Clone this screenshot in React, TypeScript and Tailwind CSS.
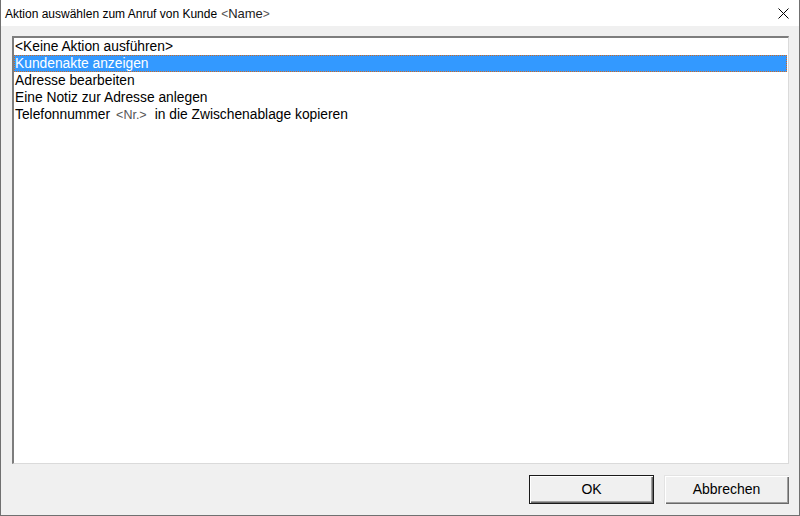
import React from "react";

const items = [
  "<Keine Aktion ausführen>",
  "Kundenakte anzeigen",
  "Adresse bearbeiten",
  "Eine Notiz zur Adresse anlegen",
];

export default function App() {
  return (
    <div
      className="w-[800px] h-[516px] flex flex-col bg-[#f0f0f0] border-l border-r border-b border-[#707070] overflow-hidden"
      style={{ fontFamily: '"Liberation Sans", Arial, sans-serif' }}
    >
      <div className="h-[26px] shrink-0 bg-white flex items-center justify-between pl-[4px] pr-[10px]">
        <div className="text-[12px] text-black leading-none flex items-baseline">
          <span>Aktion auswählen zum Anruf von Kunde</span>
          <span className="ml-[4px] text-[#555]">&lt;</span>
          <span className="text-[#222] text-[13px]">Name</span>
          <span className="text-[#555]">&gt;</span>
        </div>
        <svg width="11" height="11" viewBox="0 0 11 11" className="shrink-0">
          <path d="M0.5 0.5 L10.5 10.5 M10.5 0.5 L0.5 10.5" stroke="#000" strokeWidth="1" fill="none" />
        </svg>
      </div>
      <div className="flex-1 flex flex-col pt-[10px] pl-[11px] pr-[10px] pb-[11px]">
        <div className="h-[428px] bg-white border-t-2 border-l-2 border-t-[#7d7d7d] border-l-[#7d7d7d] border-r border-b border-r-[#dadada] border-b-[#dadada] border-b-dotted flex flex-col pr-[1px]">
          {items.map((t, i) => (
            <div
              key={i}
              className={
                "h-[17px] pl-[1px] text-[13.8px] leading-[17px] whitespace-nowrap " +
                (i === 1
                  ? "bg-[#3399ff] text-white outline outline-1 outline-dotted outline-[#d2691e] -outline-offset-1"
                  : "text-black")
              }
            >
              {t}
            </div>
          ))}
          <div className="h-[17px] pl-[1px] text-[13.8px] leading-[17px] text-black whitespace-nowrap flex items-baseline">
            <span>Telefonnummer</span>
            <span className="ml-[6px] mr-[8px] text-[12.5px] text-[#555]">&lt;Nr.&gt;</span>
            <span>in die Zwischenablage kopieren</span>
          </div>
        </div>
        <div className="mt-[11px] flex justify-end gap-[10px] pr-[0px]">
          <button className="w-[125px] h-[29px] border border-[#1a1a1a] bg-[#f0f0f0] text-[14px] text-black shadow-[inset_1px_1px_0_#ffffff,inset_-1px_-1px_0_#696969,inset_-2px_-2px_0_#a0a0a0] flex items-center justify-center">
            OK
          </button>
          <button className="w-[125px] h-[29px] bg-[#f0f0f0] text-[14px] text-black shadow-[inset_1px_1px_0_#e3e3e3,inset_2px_2px_0_#ffffff,inset_-1px_-1px_0_#696969,inset_-2px_-2px_0_#a0a0a0] flex items-center justify-center">
            Abbrechen
          </button>
        </div>
      </div>
    </div>
  );
}
